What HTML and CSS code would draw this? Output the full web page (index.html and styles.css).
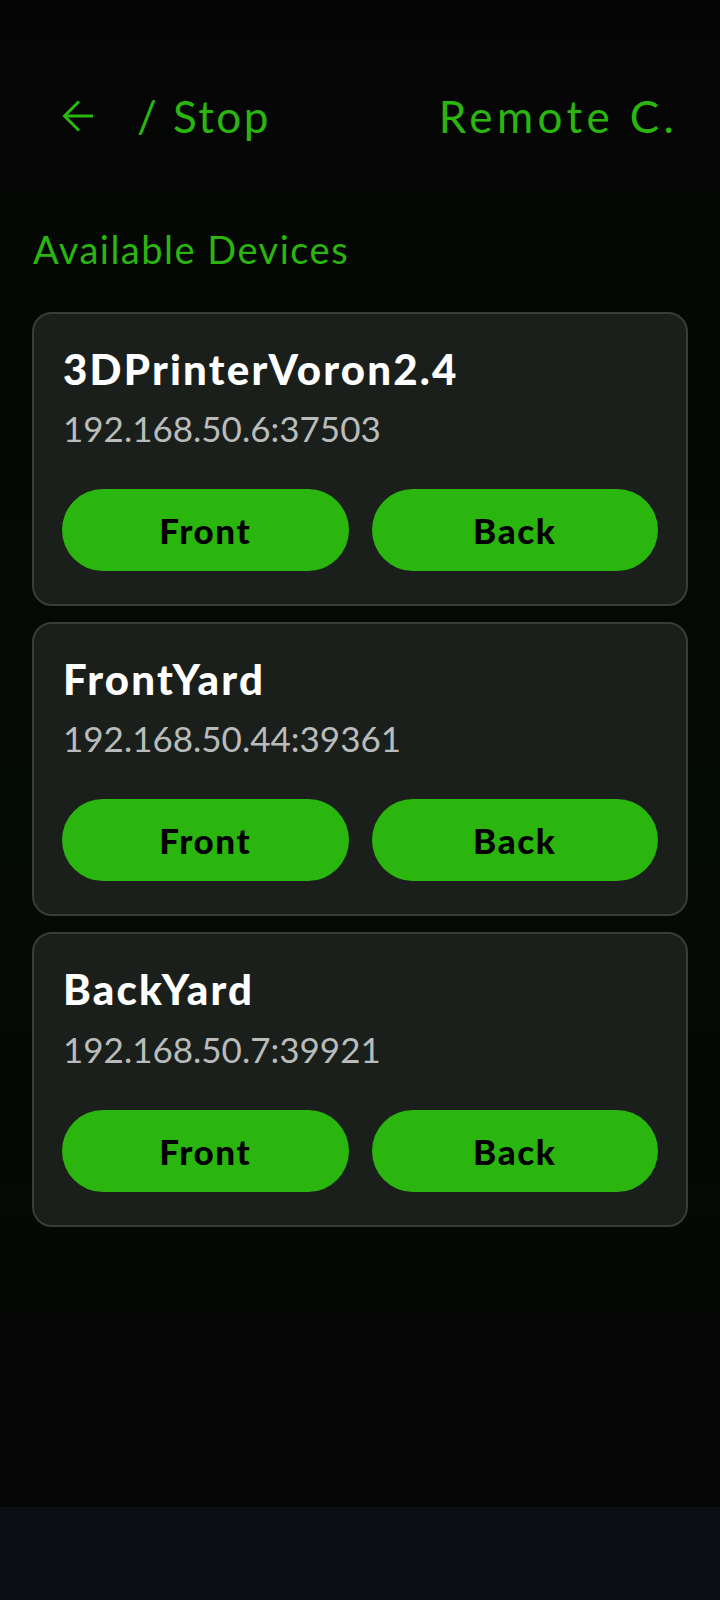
FILE: index.html
```html
<!DOCTYPE html>
<html lang="en">
<head>
  <meta charset="UTF-8" />
  <meta name="viewport" content="width=device-width, initial-scale=1.0"/>
  <title>Remote Control</title>
  <link rel="stylesheet" href="styles.css">
</head>
<body>

  <div class="screen">
    <header class="topbar">
      <button class="back-button" aria-label="Back">
        <svg width="32" height="32" viewBox="0 0 32 32" fill="none" stroke="#2bb50f" stroke-width="3" stroke-linecap="butt" stroke-linejoin="miter">
          <path d="M2.5 16 H31"/>
          <path d="M17 1.5 L2.5 16 L17 30.5"/>
        </svg>
      </button>
      <span class="page-path">/ Stop</span>
      <span class="app-title">Remote C.</span>
    </header>

    <main class="content">
      <h2 class="section-title">Available Devices</h2>

      <div class="device-list">
        <div class="device-card">
          <div class="device-name">3DPrinterVoron2.4</div>
          <div class="device-addr">192.168.50.6:37503</div>
          <div class="device-actions">
            <button class="cam-btn">Front</button>
            <button class="cam-btn">Back</button>
          </div>
        </div>

        <div class="device-card">
          <div class="device-name">FrontYard</div>
          <div class="device-addr">192.168.50.44:39361</div>
          <div class="device-actions">
            <button class="cam-btn">Front</button>
            <button class="cam-btn">Back</button>
          </div>
        </div>

        <div class="device-card">
          <div class="device-name">BackYard</div>
          <div class="device-addr">192.168.50.7:39921</div>
          <div class="device-actions">
            <button class="cam-btn">Front</button>
            <button class="cam-btn">Back</button>
          </div>
        </div>
      </div>
    </main>
  </div>

  <nav class="navbar"></nav>

</body>
</html>
```
FILE: styles.css
```css
* {
  box-sizing: border-box;
}
body {
  margin: 0;
  width: 720px;
  height: 1600px;
  overflow: hidden;
  font-family: Lato, "Open Sans", sans-serif;
  background: #050505;
}
.screen {
  height: 1507px;
  background: linear-gradient(to bottom, #050505 0%, #040904 35%, #040a04 55%, #050805 80%, #060606 100%);
  overflow: hidden;
}
.topbar {
  display: flex;
  align-items: center;
  height: 88px;
  margin-top: 72px;
  padding-left: 62px;
  white-space: nowrap;
}
.back-button {
  background: none;
  border: none;
  padding: 0;
  width: 32px;
  height: 32px;
  cursor: pointer;
}
.back-button svg {
  display: block;
}
.page-path {
  margin-left: 43px;
  font-size: 44px;
  color: #2bb50f;
  letter-spacing: 2.4px;
}
.app-title {
  margin-left: 168px;
  width: 240px;
  overflow: hidden;
  font-size: 44px;
  color: #2bb50f;
  letter-spacing: 4.4px;
}
.content {
  padding: 0 32px;
}
.section-title {
  margin: 67px 0 39px 1px;
  font-size: 38px;
  font-weight: normal;
  line-height: 1.2;
  letter-spacing: 1.5px;
  color: #2bb50f;
}
.device-list {
  display: flex;
  flex-direction: column;
  gap: 16px;
}
.device-card {
  background: #1b1f1c;
  border: 2px solid #393d3a;
  border-radius: 20px;
  padding: 30px 28px 33px;
}
.device-name {
  font-size: 42px;
  font-weight: 900;
  line-height: 1.2;
  letter-spacing: 2.2px;
  color: #fff;
  padding-left: 1px;
}
.device-addr {
  margin-top: 13px;
  font-size: 35px;
  line-height: 1.2;
  color: #b9bcba;
  padding-left: 1px;
}
.device-actions {
  display: grid;
  grid-template-columns: 1fr 1fr;
  gap: 23px;
  margin-top: 40px;
}
.cam-btn {
  height: 82px;
  border: none;
  border-radius: 41px;
  background: #2bb50f;
  color: #000;
  font-family: Lato, "Open Sans", sans-serif;
  font-size: 35px;
  font-weight: 900;
  letter-spacing: 1.6px;
  cursor: pointer;
}
.navbar {
  height: 93px;
  background: #0c1014;
}
```
